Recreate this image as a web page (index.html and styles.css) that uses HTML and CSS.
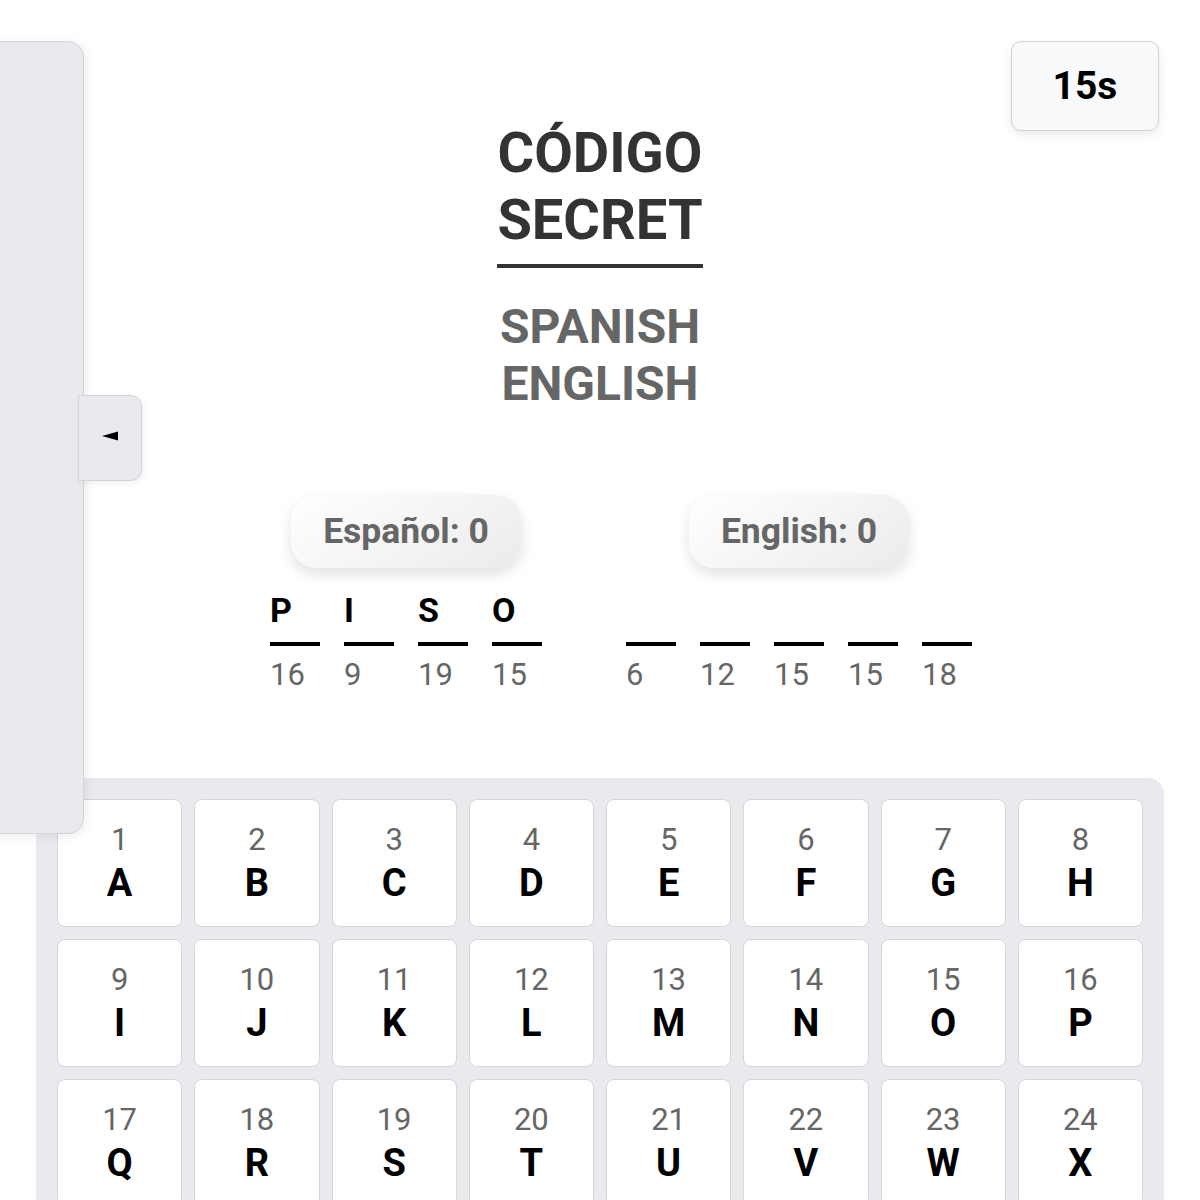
FILE: index.html
```html
<!DOCTYPE html>
<html lang="es">

<head>
    <meta charset="utf-8" />
    <meta name="viewport" content="width=device-width, initial-scale=1" />
    <title>Código Secret</title>
    <link rel="stylesheet" href="styles.css">
</head>

<body>
    <aside class="sidebar"></aside>
    <button class="sidebar-toggle" aria-label="Cerrar panel">
        <svg width="16" height="10" viewBox="0 0 16 10">
            <polygon points="0,5 16,0.5 16,9.5" fill="#000" />
        </svg>
    </button>

    <div class="timer">15s</div>

    <main class="game">
        <h1 class="title">CÓDIGO SECRET</h1>
        <p class="subtitle">SPANISH ENGLISH</p>

        <section class="boards">
            <div class="board">
                <div class="score">Español: 0</div>
                <div class="word">
                    <div class="slot"><span class="char">P</span><span class="num">16</span></div>
                    <div class="slot"><span class="char">I</span><span class="num">9</span></div>
                    <div class="slot"><span class="char">S</span><span class="num">19</span></div>
                    <div class="slot"><span class="char">O</span><span class="num">15</span></div>
                </div>
            </div>
            <div class="board">
                <div class="score">English: 0</div>
                <div class="word">
                    <div class="slot"><span class="char"></span><span class="num">6</span></div>
                    <div class="slot"><span class="char"></span><span class="num">12</span></div>
                    <div class="slot"><span class="char"></span><span class="num">15</span></div>
                    <div class="slot"><span class="char"></span><span class="num">15</span></div>
                    <div class="slot"><span class="char"></span><span class="num">18</span></div>
                </div>
            </div>
        </section>

        <section class="keyboard">
            <button class="key"><span class="key-num">1</span><span class="key-letter">A</span></button>
            <button class="key"><span class="key-num">2</span><span class="key-letter">B</span></button>
            <button class="key"><span class="key-num">3</span><span class="key-letter">C</span></button>
            <button class="key"><span class="key-num">4</span><span class="key-letter">D</span></button>
            <button class="key"><span class="key-num">5</span><span class="key-letter">E</span></button>
            <button class="key"><span class="key-num">6</span><span class="key-letter">F</span></button>
            <button class="key"><span class="key-num">7</span><span class="key-letter">G</span></button>
            <button class="key"><span class="key-num">8</span><span class="key-letter">H</span></button>
            <button class="key"><span class="key-num">9</span><span class="key-letter">I</span></button>
            <button class="key"><span class="key-num">10</span><span class="key-letter">J</span></button>
            <button class="key"><span class="key-num">11</span><span class="key-letter">K</span></button>
            <button class="key"><span class="key-num">12</span><span class="key-letter">L</span></button>
            <button class="key"><span class="key-num">13</span><span class="key-letter">M</span></button>
            <button class="key"><span class="key-num">14</span><span class="key-letter">N</span></button>
            <button class="key"><span class="key-num">15</span><span class="key-letter">O</span></button>
            <button class="key"><span class="key-num">16</span><span class="key-letter">P</span></button>
            <button class="key"><span class="key-num">17</span><span class="key-letter">Q</span></button>
            <button class="key"><span class="key-num">18</span><span class="key-letter">R</span></button>
            <button class="key"><span class="key-num">19</span><span class="key-letter">S</span></button>
            <button class="key"><span class="key-num">20</span><span class="key-letter">T</span></button>
            <button class="key"><span class="key-num">21</span><span class="key-letter">U</span></button>
            <button class="key"><span class="key-num">22</span><span class="key-letter">V</span></button>
            <button class="key"><span class="key-num">23</span><span class="key-letter">W</span></button>
            <button class="key"><span class="key-num">24</span><span class="key-letter">X</span></button>
            <button class="key"><span class="key-num">25</span><span class="key-letter">Y</span></button>
            <button class="key"><span class="key-num">26</span><span class="key-letter">Z</span></button>
        </section>
    </main>
</body>

</html>
```

FILE: styles.css
```css
:root {
    --panel: #e8eaed;
    --line: #d2d4d7;
    --text: #333;
    --muted: #666;
}

* {
    box-sizing: border-box;
}

body {
    margin: 0;
    font-family: Roboto, "Liberation Sans", sans-serif;
    background: #fff;
    color: var(--text);
}

/* side panel (collapsed) */
.sidebar {
    position: absolute;
    top: 41px;
    left: -40px;
    width: 124px;
    height: 793px;
    background: var(--panel);
    border: 1px solid var(--line);
    border-radius: 0 16px 16px 0;
    box-shadow: 2px 2px 10px rgba(0, 0, 0, 0.08);
    z-index: 10;
}

.sidebar-toggle {
    position: absolute;
    top: 395px;
    left: 78px;
    width: 64px;
    height: 86px;
    padding: 0 0 4px;
    display: flex;
    align-items: center;
    justify-content: center;
    background: var(--panel);
    border: 1px solid var(--line);
    border-radius: 0 11px 11px 0;
    box-shadow: 2px 2px 6px rgba(0, 0, 0, 0.06);
    cursor: pointer;
    z-index: 11;
}

.timer {
    position: absolute;
    top: 41px;
    right: 41px;
    width: 148px;
    height: 90px;
    display: flex;
    align-items: center;
    justify-content: center;
    font-size: 39px;
    font-weight: 700;
    color: #000;
    background: #f8f9fa;
    border: 1.5px solid #cfd1d4;
    border-radius: 10px;
    box-shadow: 0 4px 10px rgba(0, 0, 0, 0.08);
}

.game {
    padding-top: 120px;
}

.title {
    width: min-content;
    margin: 0 auto;
    padding-bottom: 10px;
    border-bottom: 4px solid var(--text);
    font-size: 56px;
    line-height: 1.2;
    font-weight: 700;
    text-align: center;
    color: var(--text);
}

.subtitle {
    width: min-content;
    margin: 30px auto 0;
    font-size: 48px;
    line-height: 57px;
    font-weight: 700;
    text-align: center;
    color: var(--muted);
}

.boards {
    margin-top: 83px;
    padding-left: 42px;
    display: flex;
    justify-content: center;
    gap: 84px;
}

.board {
    display: flex;
    flex-direction: column;
    align-items: center;
}

.score {
    padding: 16px 32px;
    font-size: 35.5px;
    line-height: 41px;
    font-weight: 700;
    color: var(--muted);
    background: linear-gradient(145deg, #ffffff, #ebebeb);
    border-radius: 26px;
    box-shadow: 0 6px 14px rgba(0, 0, 0, 0.12);
}

.word {
    margin-top: 22px;
    display: flex;
    gap: 24px;
}

.slot {
    width: 50px;
    display: flex;
    flex-direction: column;
}

.char {
    height: 56px;
    padding-bottom: 12px;
    border-bottom: 4px solid #000;
    font-size: 34px;
    line-height: 40px;
    font-weight: 700;
    color: #000;
}

.num {
    margin-top: 11px;
    font-size: 31px;
    line-height: 36px;
    color: var(--muted);
}

.keyboard {
    margin: 85px 36px 0;
    padding: 21px;
    display: grid;
    grid-template-columns: repeat(8, 1fr);
    grid-auto-rows: 128px;
    gap: 12px;
    background: var(--panel);
    border-radius: 16px;
}

.key {
    display: flex;
    flex-direction: column;
    align-items: center;
    justify-content: center;
    gap: 3px;
    padding: 0;
    font-family: inherit;
    background: #fff;
    border: 1.5px solid #d4d6d9;
    border-radius: 8px;
    cursor: pointer;
}

.key-num {
    font-size: 31px;
    line-height: 36px;
    color: var(--muted);
}

.key-letter {
    font-size: 38px;
    line-height: 44px;
    font-weight: 700;
    color: #000;
}
```
